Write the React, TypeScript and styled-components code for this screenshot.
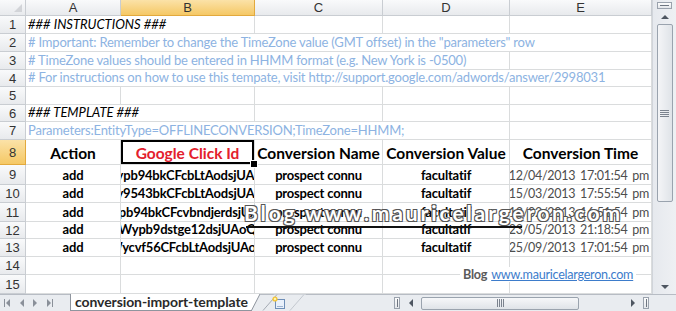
import React from 'react'
import styled, { createGlobalStyle, css } from 'styled-components'

const GlobalStyle = createGlobalStyle`
  html, body {
    margin: 0;
    padding: 0;
    background: #ffffff;
    overflow: hidden;
  }
  * {
    box-sizing: border-box;
  }
`

const FONT = `Lato, 'Open Sans', 'Liberation Sans', sans-serif`
const GRID = '#dadcdd'
const BLUE_NOTE = '#8db3e2'

const Window = styled.div`
  width: 676px;
  height: 311px;
  display: flex;
  flex-direction: column;
  font-family: ${FONT};
  background: #fff;
`

const Main = styled.div`
  display: flex;
  height: 294px;
`

const Sheet = styled.div`
  position: relative;
  display: grid;
  grid-template-columns: 26px 95px 134px 128px 127px 142px;
  grid-template-rows: 16px 18px 18px 18px 17px 18px 17px 18px 25px 20px 18px 19px 17px 18px 18px 19px;
  width: 652px;
  overflow: hidden;
`

const headerBg = css`
  background: linear-gradient(#f9fafb, #e8eaed);
  border-right: 1px solid #c9cdd2;
  border-bottom: 1px solid #c9cdd2;
  color: #333;
  font-family: 'Liberation Sans', Arial, sans-serif;
  font-size: 13px;
  display: flex;
  align-items: center;
  justify-content: center;
`

const selectedBg = css`
  background: linear-gradient(#fbe2a8, #f5c865);
  border-right-color: #e2a93d;
  border-bottom-color: #e2a93d;
`

const Corner = styled.div`
  ${headerBg};
  position: relative;
  &::after {
    content: '';
    position: absolute;
    right: 3px;
    bottom: 3px;
    border-left: 8px solid transparent;
    border-bottom: 8px solid #d2d4d8;
  }
`

const ColHead = styled.div<{ $selected?: boolean }>`
  ${headerBg};
  ${(p) => p.$selected && selectedBg};
`

const RowHead = styled.div<{ $selected?: boolean }>`
  ${headerBg};
  ${(p) => p.$selected && selectedBg};
`

const Cell = styled.div<{ $span?: number }>`
  grid-column: span ${(p) => p.$span ?? 1};
  border-right: 1px solid ${GRID};
  border-bottom: 1px solid ${GRID};
  display: flex;
  align-items: flex-end;
  padding: 0 2px 1px;
  white-space: nowrap;
  overflow: hidden;
`

const NoteCell = styled(Cell)<{ $blue?: boolean; $italic?: boolean }>`
  font-size: 13px;
  color: ${(p) => (p.$blue ? BLUE_NOTE : '#000')};
  font-style: ${(p) => (p.$italic ? 'italic' : 'normal')};
  letter-spacing: ${(p) => (p.$italic ? '0' : '-0.2px')};
`

const HeadCell = styled(Cell)<{ $red?: boolean; $active?: boolean }>`
  justify-content: center;
  align-items: center;
  padding-top: 3px;
  font-size: 15.5px;
  font-weight: 700;
  color: ${(p) => (p.$red ? '#e3202c' : '#000')};
  overflow: visible;
  ${(p) =>
    p.$active &&
    css`
      position: relative;
      z-index: 2;
      box-shadow: inset 0 0 0 2px #000;
      &::after {
        content: '';
        position: absolute;
        right: -4px;
        bottom: -4px;
        width: 6px;
        height: 6px;
        background: #000;
        border: 1px solid #fff;
      }
    `}
`

const DataCell = styled(Cell)`
  justify-content: center;
  font-size: 13px;
  font-weight: 700;
  letter-spacing: -0.2px;
  color: #000;
`

const DateCell = styled(Cell)`
  justify-content: flex-end;
  font-size: 12.5px;
  letter-spacing: -0.3px;
  color: #4d4d4d;
  word-spacing: 2px;
`

const Watermark = styled.div`
  position: absolute;
  left: 244px;
  top: 200px;
  font-family: ${FONT};
  font-size: 21px;
  font-weight: 700;
  letter-spacing: 2.9px;
  color: #fff;
  text-shadow:
    -1px -1px 0 #555,
    1px -1px 0 #555,
    -1px 1px 0 #555,
    1px 1px 0 #555;
  white-space: nowrap;
  z-index: 3;
  &::after {
    content: '';
    position: absolute;
    left: 2px;
    width: 276px;
    top: 26px;
    height: 2px;
    background: #111;
  }
`

const BlogNote = styled.div`
  position: absolute;
  left: 460px;
  top: 267px;
  padding: 0 3px;
  background: #fff;
  font-size: 12.6px;
  letter-spacing: -0.25px;
  white-space: nowrap;
  z-index: 3;
`

const BlogLabel = styled.span`
  color: #5a5a5a;
  font-weight: 700;
  margin-right: 4px;
`

const BlogLink = styled.span`
  color: #3d7ccb;
  text-decoration: underline;
`

/* vertical scrollbar */
const VScroll = styled.div`
  width: 24px;
  display: flex;
  flex-direction: column;
  align-items: center;
  background: linear-gradient(90deg, #e6e9ee, #eef0f3);
  border-left: 1px solid #d0d4da;
`

const SplitBox = styled.div<{ $vertical?: boolean }>`
  width: ${(p) => (p.$vertical ? '6px' : '15px')};
  height: ${(p) => (p.$vertical ? '12px' : '7px')};
  margin-top: ${(p) => (p.$vertical ? '0' : '2px')};
  border: 1px solid #9aa2ad;
  background: linear-gradient(#fdfdfd, #e3e6ea);
  display: flex;
  align-items: center;
  justify-content: center;
  &::after {
    content: '';
    width: ${(p) => (p.$vertical ? '1px' : '9px')};
    height: ${(p) => (p.$vertical ? '8px' : '1px')};
    background: #6e7681;
  }
`

const ArrowBtn = styled.div`
  width: 17px;
  height: 15px;
  display: flex;
  align-items: center;
  justify-content: center;
  flex-shrink: 0;
`

const VThumb = styled.div`
  width: 16px;
  height: 178px;
  border: 1px solid #9aa3ae;
  border-radius: 2px;
  background: linear-gradient(90deg, #f4f5f7, #dfe3e8);
  display: flex;
  align-items: center;
  justify-content: center;
`

const VSpacer = styled.div`
  flex: 1;
`

/* sheet tab bar */
const TabBar = styled.div`
  height: 17px;
  display: flex;
  align-items: stretch;
  background: #e9ecf0;
  border-top: 1px solid #b7bcc4;
`

const TabNav = styled.div`
  display: flex;
  align-items: center;
  gap: 7px;
  padding: 0 6px 0 4px;
  width: 70px;
`

const SheetTab = styled.div`
  display: flex;
  align-items: center;
  background: #fff;
  margin-top: -1px;
  padding: 0 2px 1px 4px;
  border-left: 1px solid #8f959e;
  border-bottom: 1px solid #8f959e;
  font-size: 14px;
  font-weight: 700;
  color: #2a2a2a;
  letter-spacing: -0.1px;
`

const Slant = styled.svg`
  display: block;
  margin-top: -1px;
`

const HScroll = styled.div`
  margin-left: auto;
  width: 258px;
  display: flex;
  align-items: center;
  gap: 2px;
  padding: 0 3px 0 0;
`

const HThumb = styled.div`
  width: 158px;
  height: 13px;
  border: 1px solid #9aa3ae;
  border-radius: 2px;
  background: linear-gradient(#f6f7f9, #dfe3e8);
  display: flex;
  align-items: center;
  justify-content: center;
`

const ScrollCorner = styled.div`
  width: 24px;
  background: #e9ecf0;
`

const Grip: React.FC<{ vertical?: boolean }> = ({ vertical }) =>
  vertical ? (
    <svg width="9" height="7" viewBox="0 0 9 7">
      {[0.5, 2.5, 4.5, 6.5].map((y) => (
        <line key={y} x1="0" x2="9" y1={y} y2={y} stroke="#7b838e" strokeWidth="1" />
      ))}
    </svg>
  ) : (
    <svg width="7" height="8" viewBox="0 0 7 8">
      {[0.5, 2.5, 4.5, 6.5].map((x) => (
        <line key={x} y1="0" y2="8" x1={x} x2={x} stroke="#7b838e" strokeWidth="1" />
      ))}
    </svg>
  )

const Tri: React.FC<{ dir: 'up' | 'down' | 'left' | 'right'; color?: string; size?: number }> = ({
  dir,
  color = '#4e5661',
  size = 4,
}) => {
  const s = size
  const pts = {
    up: `0,${s} ${s},0 ${s * 2},${s}`,
    down: `0,0 ${s * 2},0 ${s},${s}`,
    left: `${s},0 ${s},${s * 2} 0,${s}`,
    right: `0,0 0,${s * 2} ${s},${s}`,
  }[dir]
  const vert = dir === 'up' || dir === 'down'
  return (
    <svg width={vert ? s * 2 : s} height={vert ? s : s * 2}>
      <polygon points={pts} fill={color} />
    </svg>
  )
}

const NavIcon: React.FC<{ dir: 'left' | 'right'; bar?: boolean }> = ({ dir, bar }) => (
  <svg width="7" height="8" viewBox="0 0 7 8">
    {bar && <rect x={dir === 'left' ? 0 : 6} y="0" width="1" height="8" fill="#8a9099" />}
    {dir === 'left' ? (
      <polygon points="6,0 6,8 2,4" fill="#8a9099" />
    ) : (
      <polygon points="1,0 1,8 5,4" fill="#8a9099" />
    )}
  </svg>
)

const NewSheetTab: React.FC = () => (
  <svg width="46" height="17" viewBox="0 0 46 17" style={{ marginTop: -1 }}>
    <polygon points="0,16.5 14,0.5 46,0.5 32,16.5" fill="#e9ecf0" />
    <line x1="3" y1="16.5" x2="17" y2="0.5" stroke="#a5abb4" />
    <line x1="30" y1="16.5" x2="44" y2="0.5" stroke="#c3c8cf" />
    <rect x="15.5" y="5.5" width="9" height="9" fill="#eaf1fb" stroke="#6f8fb8" />
    <rect x="17" y="12" width="6" height="1" fill="#9fb4d0" />
    <circle cx="15" cy="5" r="2.6" fill="#f3c53a" />
    <circle cx="15" cy="5" r="1.2" fill="#fff3b0" />
  </svg>
)

const cols = ['A', 'B', 'C', 'D', 'E']

const rows = [
  { id: 'ypb', click: 'Wypb94bkCFcbLtAodsjUAoQ', time: '12/04/2013 17:01:54 pm' },
  { id: 'y95', click: 'Wy9543bkCFcbLtAodsjUAoQ', time: '15/03/2013 17:55:54 pm' },
  { id: 'pbc', click: 'Wypb94bkCFcvbndjerdsjUAoQ', time: '13/02/2013 16:51:54 pm' },
  { id: 'wyd', click: 'Wypb9dstge12dsjUAoQ', time: '23/05/2013 21:18:54 pm' },
  { id: 'vyc', click: 'Wycvf56CFcbLtAodsjUAoQ', time: '25/09/2013 17:01:54 pm' },
]

const Blank: React.FC<{ n: number }> = ({ n }) => (
  <>
    {Array.from({ length: n }, (_, i) => (
      <Cell key={i} />
    ))}
  </>
)

const App: React.FC = () => {
  return (
    <>
      <GlobalStyle />
      <Window>
        <Main>
          <Sheet>
            <Corner />
            {cols.map((c) => (
              <ColHead key={c} $selected={c === 'B'}>
                {c}
              </ColHead>
            ))}

            <RowHead>1</RowHead>
            <NoteCell $span={2} $italic>
              ### INSTRUCTIONS ###
            </NoteCell>
            <Blank n={3} />

            <RowHead>2</RowHead>
            <NoteCell $span={5} $blue>
              # Important: Remember to change the TimeZone value (GMT offset) in the "parameters" row
            </NoteCell>

            <RowHead>3</RowHead>
            <NoteCell $span={4} $blue>
              # TimeZone values should be entered in HHMM format (e.g. New York is -0500)
            </NoteCell>
            <Blank n={1} />

            <RowHead>4</RowHead>
            <NoteCell $span={5} $blue>
              # For instructions on how to use this tempate, visit http://support.google.com/adwords/answer/2998031
            </NoteCell>

            <RowHead>5</RowHead>
            <Blank n={5} />

            <RowHead>6</RowHead>
            <NoteCell $span={2} $italic>
              ### TEMPLATE ###
            </NoteCell>
            <Blank n={3} />

            <RowHead>7</RowHead>
            <NoteCell $span={4} $blue>
              Parameters:EntityType=OFFLINECONVERSION;TimeZone=HHMM;
            </NoteCell>
            <Blank n={1} />

            <RowHead $selected>8</RowHead>
            <HeadCell>Action</HeadCell>
            <HeadCell $red $active>
              Google Click Id
            </HeadCell>
            <HeadCell>Conversion Name</HeadCell>
            <HeadCell>Conversion Value</HeadCell>
            <HeadCell>Conversion Time</HeadCell>

            {rows.map((r, i) => (
              <React.Fragment key={r.id}>
                <RowHead>{9 + i}</RowHead>
                <DataCell>add</DataCell>
                <DataCell>{r.click}</DataCell>
                <DataCell>prospect connu</DataCell>
                <DataCell>facultatif</DataCell>
                <DateCell>{r.time}</DateCell>
              </React.Fragment>
            ))}

            <RowHead>14</RowHead>
            <Blank n={5} />
            <RowHead>15</RowHead>
            <Blank n={5} />

            <Watermark>Blog www.mauricelargeron.com</Watermark>
            <BlogNote>
              <BlogLabel>Blog</BlogLabel>
              <BlogLink>www.mauricelargeron.com</BlogLink>
            </BlogNote>
          </Sheet>

          <VScroll>
            <SplitBox />
            <ArrowBtn>
              <Tri dir="up" />
            </ArrowBtn>
            <VThumb>
              <Grip vertical />
            </VThumb>
            <VSpacer />
            <ArrowBtn>
              <Tri dir="down" />
            </ArrowBtn>
          </VScroll>
        </Main>

        <TabBar>
          <TabNav>
            <NavIcon dir="left" bar />
            <NavIcon dir="left" />
            <NavIcon dir="right" />
            <NavIcon dir="right" bar />
          </TabNav>
          <SheetTab>conversion-import-template</SheetTab>
          <Slant width="10" height="17" viewBox="0 0 10 17">
            <polygon points="0,0 0,16.5 1,16.5 10,0" fill="#fff" />
            <line x1="0" y1="16.5" x2="2" y2="16.5" stroke="#8f959e" />
            <line x1="1.5" y1="16.5" x2="10" y2="0" stroke="#8f959e" />
          </Slant>
          <NewSheetTab />
          <HScroll>
            <SplitBox $vertical />
            <ArrowBtn>
              <Tri dir="left" />
            </ArrowBtn>
            <HThumb>
              <Grip />
            </HThumb>
            <VSpacer />
            <ArrowBtn>
              <Tri dir="right" />
            </ArrowBtn>
            <SplitBox $vertical />
          </HScroll>
          <ScrollCorner />
        </TabBar>
      </Window>
    </>
  )
}

export default App
